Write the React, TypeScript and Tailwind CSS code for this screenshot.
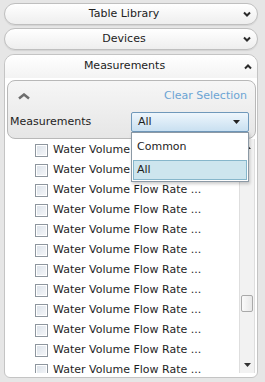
import React from "react";

function ChevronDown() {
  return (
    <svg width="8" height="6" viewBox="0 0 8 6" className="shrink-0">
      <polyline points="1,1.5 4,4.5 7,1.5" fill="none" stroke="#2b2b2b" strokeWidth="2" />
    </svg>
  );
}

function ChevronUp({ w = 8, h = 6, color = "#2b2b2b", sw = 2 }: { w?: number; h?: number; color?: string; sw?: number }) {
  return (
    <svg width={w} height={h} viewBox={`0 0 ${w} ${h}`} className="shrink-0">
      <polyline points={`1,${h - 1.5} ${w / 2},1.5 ${w - 1},${h - 1.5}`} fill="none" stroke={color} strokeWidth={sw} />
    </svg>
  );
}

function HeaderPill({ title }: { title: string }) {
  return (
    <div className="h-[22px] flex items-center rounded-[11px] border border-[#bfbfbf] bg-gradient-to-b from-[#ffffff] to-[#eeeeee] shadow-[0_1px_1px_rgba(0,0,0,0.08)]">
      <span className="flex-1 text-center text-[#222]">{title}</span>
      <span className="mr-[6px]">
        <ChevronDown />
      </span>
    </div>
  );
}

function Row() {
  return (
    <div className="h-[20px] flex items-center pl-[30px] gap-[5px] shrink-0">
      <span className="w-[13px] h-[13px] border border-[#8e969e] bg-gradient-to-br from-[#d9e0e8] to-[#f7f8fa] shadow-[inset_0_0_0_1px_#ffffff] shrink-0" />
      <span className="text-[#1e1e1e] whitespace-nowrap">Water Volume Flow Rate ...</span>
    </div>
  );
}

export default function App() {
  const rows = Array.from({ length: 12 }, (_, i) => i);
  return (
    <div className="w-[265px] h-[382px] bg-[#e6e6e6] pt-[3px] px-[4px] pr-[7px] flex flex-col overflow-hidden font-['DejaVu_Sans',sans-serif] text-[11px]">
      <HeaderPill title="Table Library" />
      <div className="mt-[3px]">
        <HeaderPill title="Devices" />
      </div>
      <div className="mt-[4px] mb-[4px] flex-1 min-h-0 flex flex-col border border-[#c4c4c4] rounded-t-[10px] rounded-b-[6px] bg-white">
        <div className="h-[23px] shrink-0 flex items-center rounded-t-[10px] bg-gradient-to-b from-[#ffffff] to-[#f3f3f3]">
          <span className="flex-1 text-center text-[#222]">Measurements</span>
          <span className="mr-[5px]">
            <ChevronUp />
          </span>
        </div>
        <div className="mt-[2px] ml-[2px] mr-[1px] h-[59px] shrink-0 rounded-[8px] border border-[#b8b8b8] bg-gradient-to-b from-[#f6f6f6] to-[#e6e6e6] pt-[5px] px-[2px] flex flex-col gap-[6px] relative z-10">
          <div className="h-[20px] flex items-center justify-between pl-[8px] pr-[6px]">
            <ChevronUp w={12} h={7} color="#6e6e6e" sw={2.5} />
            <span className="text-[#6ba4d4]">Clear Selection</span>
          </div>
          <div className="h-[20px] flex items-center justify-between">
            <span className="text-[#1e1e1e]">Measurements</span>
            <div className="relative mr-[4px]">
              <div className="w-[118px] h-[20px] border border-[#6f98ba] rounded-[2px] bg-gradient-to-b from-[#eef6fc] to-[#c9e0f1] flex items-center justify-between pl-[6px] pr-[8px]">
                <span className="text-[#1e1e1e]">All</span>
                <svg width="7" height="4" viewBox="0 0 7 4">
                  <polygon points="0,0 7,0 3.5,4" fill="#222" />
                </svg>
              </div>
              <div className="absolute top-[20px] left-0 w-[118px] border border-[#8c99a5] bg-white shadow-[1px_2px_3px_rgba(0,0,0,0.2)] p-[1px]">
                <div className="h-[26px] flex items-center pl-[4px] text-[#1e1e1e]">Common</div>
                <div className="h-[20px] flex items-center pl-[3px] border border-[#86b6cb] bg-[#cde5ee] text-[#1e1e1e]">All</div>
              </div>
            </div>
          </div>
        </div>
        <div className="flex-1 min-h-0 flex mb-[4px]">
          <div className="flex-1 min-w-0 overflow-hidden pt-[1px] flex flex-col">
            {rows.map((i) => (
              <Row key={i} />
            ))}
          </div>
          <div className="w-[16px] mr-[2px] shrink-0 flex flex-col border-x border-[#dedede] bg-[#f2f2f2]">
            <div className="h-[16px] flex items-center justify-center shrink-0">
              <svg width="7" height="4" viewBox="0 0 7 4">
                <polygon points="0,4 7,4 3.5,0" fill="#333" />
              </svg>
            </div>
            <div className="flex-1 flex flex-col">
              <div className="h-[140px]" />
              <div className="h-[17px] mx-[1px] rounded-[2px] border border-[#a9a9a9] bg-gradient-to-r from-[#fafafa] to-[#e8e8e8]" />
            </div>
            <div className="h-[16px] flex items-center justify-center shrink-0">
              <svg width="7" height="4" viewBox="0 0 7 4">
                <polygon points="0,0 7,0 3.5,4" fill="#333" />
              </svg>
            </div>
          </div>
        </div>
      </div>
    </div>
  );
}
